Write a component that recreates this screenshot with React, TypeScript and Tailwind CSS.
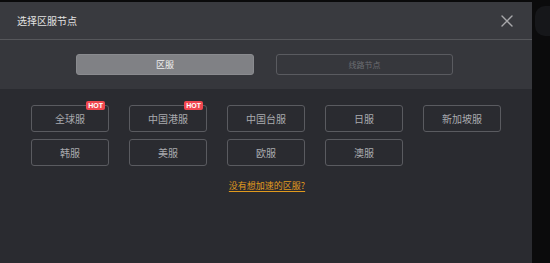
import React from "react";

const regions: { name: string; hot?: boolean }[] = [
  { name: "全球服", hot: true },
  { name: "中国港服", hot: true },
  { name: "中国台服" },
  { name: "日服" },
  { name: "新加坡服" },
  { name: "韩服" },
  { name: "美服" },
  { name: "欧服" },
  { name: "澳服" },
];

export default function App() {
  return (
    <div
      className="w-[550px] h-[263px] bg-[#0a0a0b] flex overflow-hidden"
      style={{ fontFamily: '"Noto Sans CJK SC", "Noto Sans", sans-serif' }}
    >
      <div className="w-[532px] h-full flex flex-col pt-[2px] bg-[#0a0a0b]">
        <div className="h-[38px] bg-[#393a3f] flex items-center justify-between pl-[17px] pr-[19px] border-b border-[#56575b]">
          <span className="text-[10px] text-[#e2e2e2] leading-none">选择区服节点</span>
          <svg width="12" height="12" viewBox="0 0 12 12" className="text-[#a8a8ab]">
            <path d="M1 1L11 11M11 1L1 11" stroke="currentColor" strokeWidth="1.4" strokeLinecap="round" />
          </svg>
        </div>
        <div className="h-[49px] bg-[#36373c] flex items-center pl-[76px] gap-[22px]">
          <div className="w-[178px] h-[21px] rounded-[3px] bg-[#808185] border border-[#8a8b8f] flex items-center justify-center text-[9px] text-[#f0f0f0]">
            区服
          </div>
          <div className="w-[177px] h-[21px] rounded-[3px] border border-[#5a5b60] flex items-center justify-center text-[8px] text-[#6c6d72]">
            线路节点
          </div>
        </div>
        <div className="flex-1 bg-[#2a2b30] pt-[16px] flex flex-col">
          <div className="grid grid-cols-[repeat(5,78px)] gap-x-[20px] gap-y-[7px] pl-[31px]">
            {regions.map((r) => (
              <div
                key={r.name}
                className="relative h-[27px] rounded-[3px] border border-[#5a5b60] flex items-center justify-center text-[10px] text-[#a9aaae]"
              >
                {r.name}
                {r.hot && (
                  <span className="absolute right-[3px] top-[-5px] h-[9px] px-[2px] rounded-[2px] bg-[#f0474f] text-white text-[7px] font-bold leading-[9px]" style={{ fontFamily: '"Liberation Sans", sans-serif' }}>
                    HOT
                  </span>
                )}
              </div>
            ))}
          </div>
          <div className="flex justify-center mt-[15px] pl-[2px]">
            <span className="text-[9px] text-[#e09a1e] underline underline-offset-2 leading-none">没有想加速的区服?</span>
          </div>
        </div>
      </div>
      <div className="flex-1 h-full bg-[#0b0b0c] pt-[6px]">
        <div className="h-[30px] ml-[3px] rounded-l-[10px] bg-[#16171a]" />
      </div>
    </div>
  );
}
